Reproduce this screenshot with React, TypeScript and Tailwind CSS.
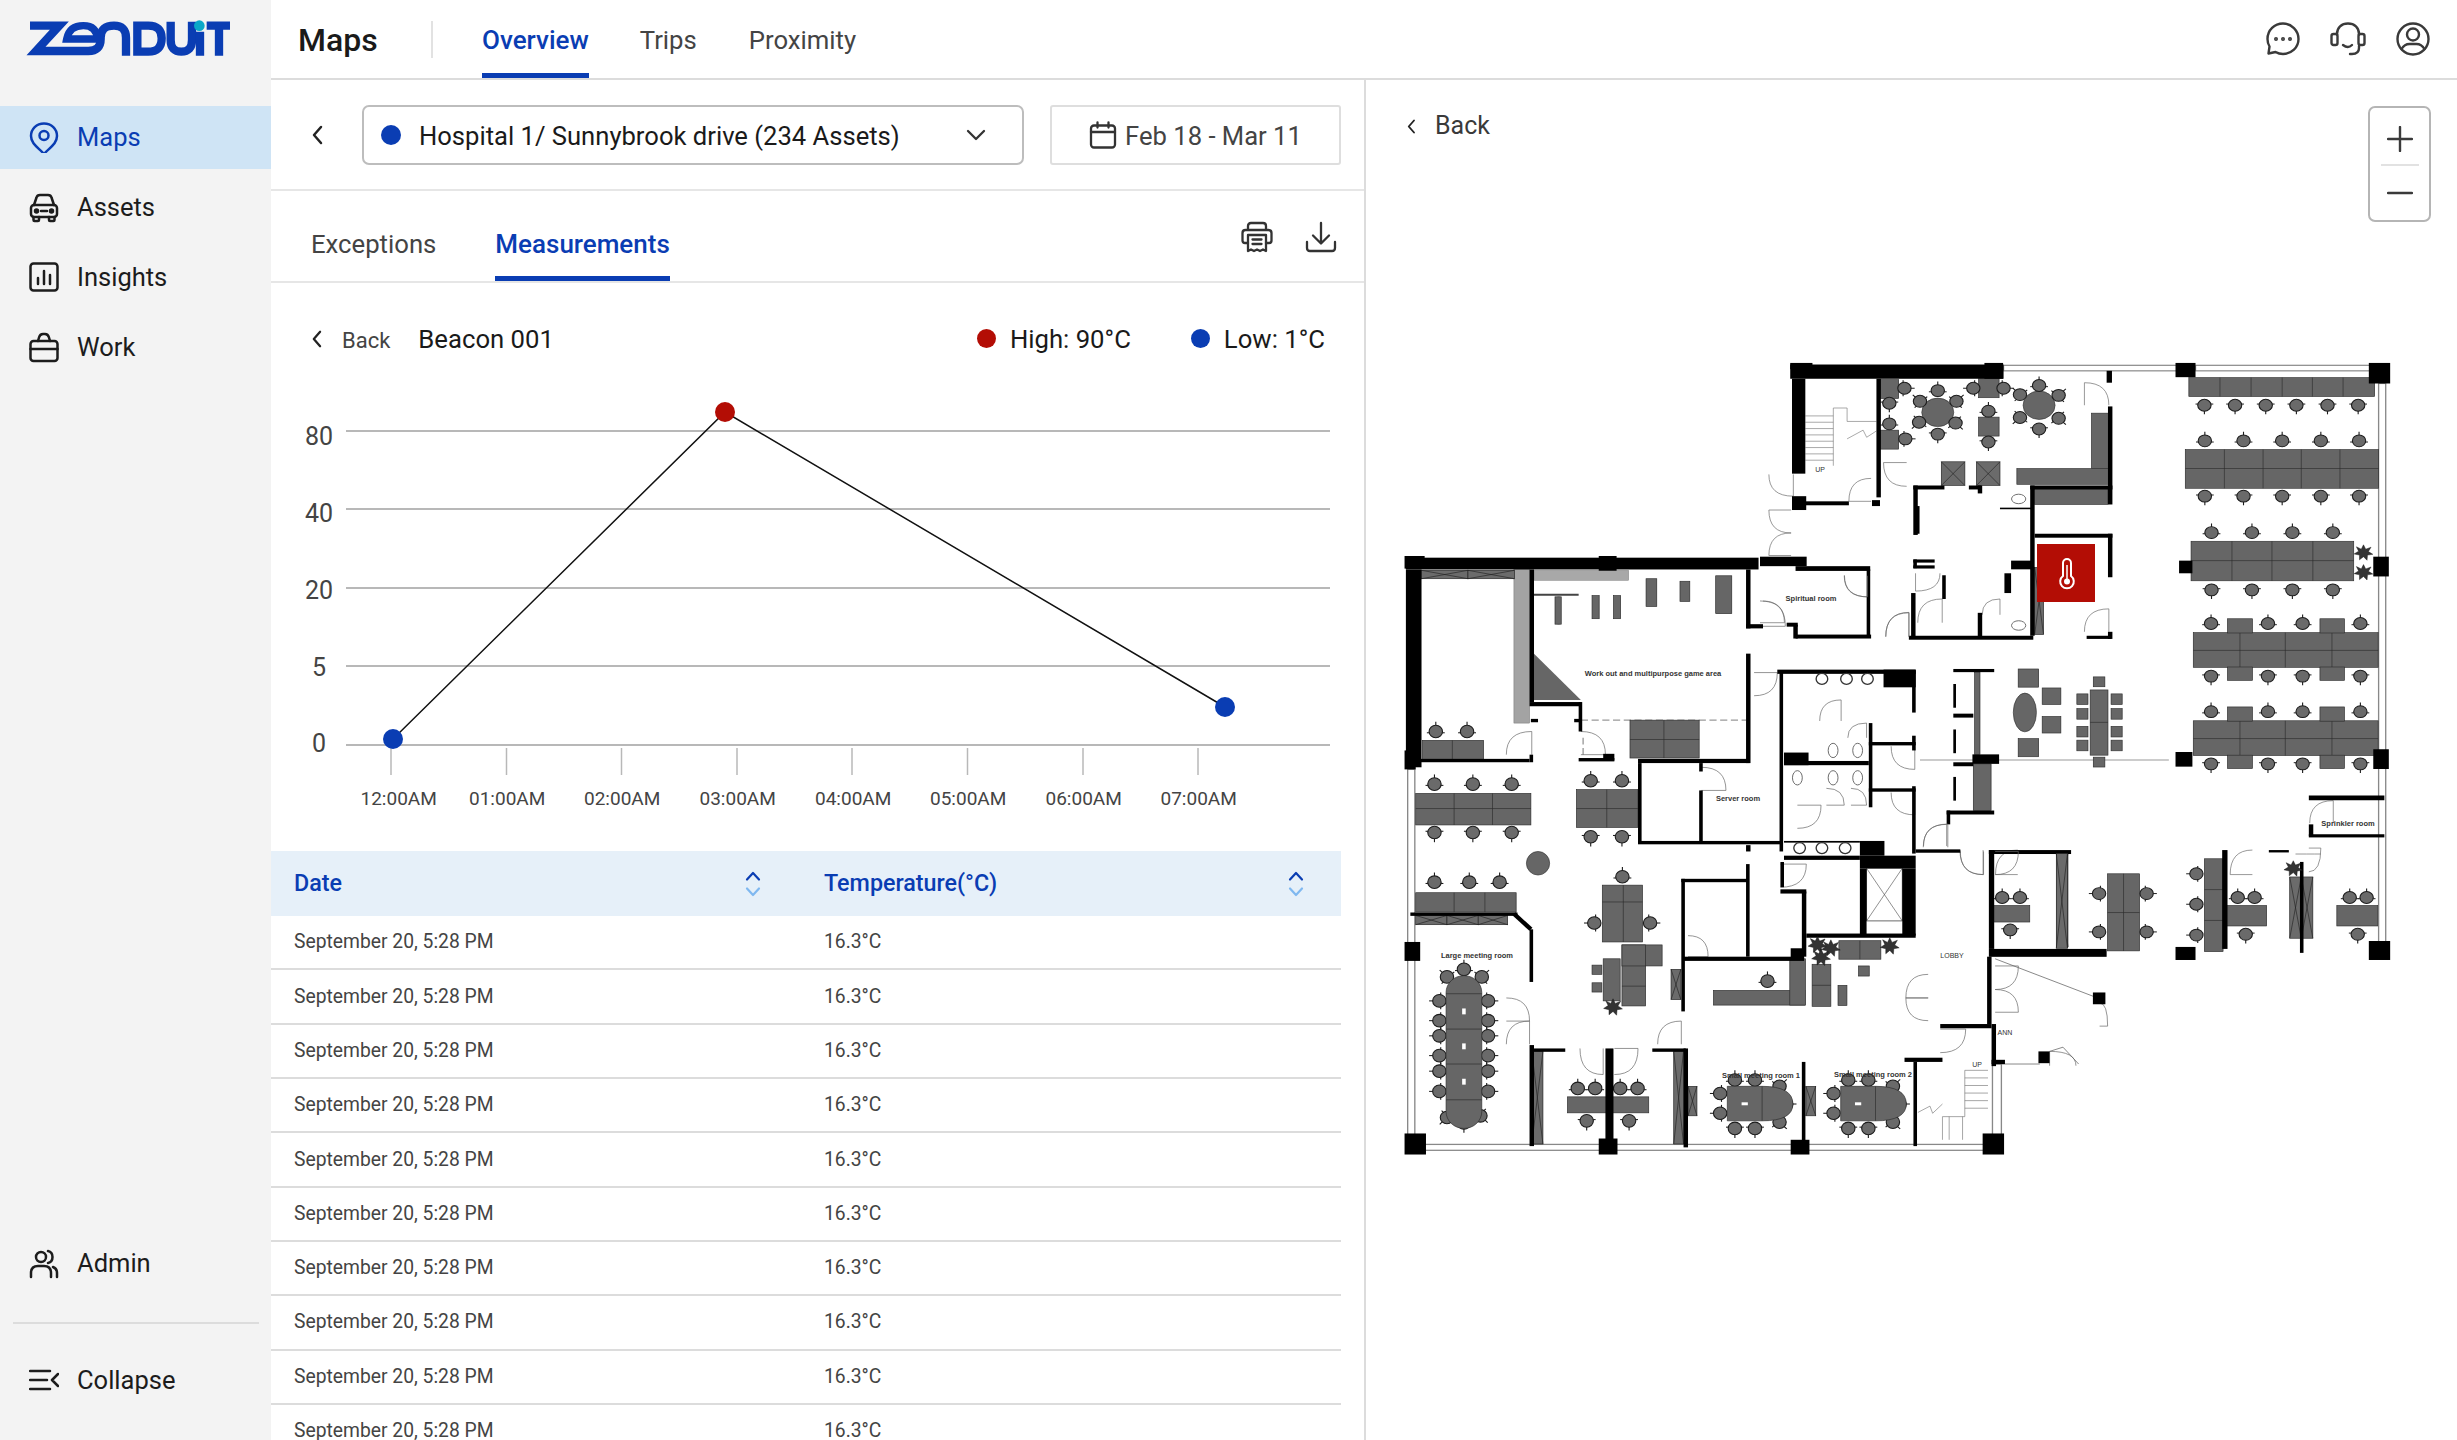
import React from 'react';

type Box = number[];

const BLUE = '#0a3db3';
const RED = '#b30d05';

// ---- floor plan data, in two sets of coordinates that are scaled to the page by <g transform>
const WALLS_A: Box[] = [
  [68,62,480,36],[68,58,50,16],[505,58,42,40],[72,98,30,240],[72,395,32,35],[100,408,100,10],[262,98,10,300],[252,405,18,15],
  [345,368,70,10],[345,368,10,125],[470,368,28,10],[490,368,10,20],[608,368,185,10],[783,168,10,248],[608,368,10,380],[618,490,175,10],
  [783,490,10,110],[780,78,12,30],[735,748,55,8],[783,738,10,18],[340,640,10,110],[240,580,8,170],[80,745,170,10],[335,748,280,10],
  [490,690,10,60],[0,548,105,24],[80,572,168,12],[60,715,25,10],[75,720,10,35],[345,555,48,8],[345,570,48,8],[345,555,8,22],
  [410,595,8,60],[353,420,6,70],[565,558,50,22],[550,590,15,50],[540,424,70,4],[943,558,30,32],[935,1042,38,37],[1380,548,35,50],
  [1380,1035,35,50],[935,58,45,36],[1370,58,48,52],[435,832,92,8],[435,945,45,10],[435,1068,45,10],[478,1048,60,24],[420,1190,107,10],
  [420,1190,8,35],[435,870,6,60],[435,985,6,60],[435,1105,6,60],[515,1290,185,10],[515,1290,12,250],[515,1540,265,20],[1040,1290,12,250],
  [1145,1290,45,6],[1215,1320,8,230],[1235,1152,170,12],[1235,1250,170,8],[1235,1225,10,30],[935,1535,45,33],[1370,1520,48,48],
];

const WALLS_B: Box[] = [
  [58,42,790,28],[55,38,45,30],[490,38,40,35],[58,70,35,470],[55,500,25,45],[335,70,10,315],[335,385,115,10],[445,385,8,70],
  [338,425,16,8],[435,425,12,8],[80,520,255,8],[335,510,8,18],[445,518,80,8],[500,508,25,16],[578,520,250,10],[820,70,10,140],
  [820,200,38,10],[820,270,10,260],[578,530,8,190],[578,715,320,8],[715,530,8,20],[715,595,8,125],[895,310,8,430],[890,308,310,10],
  [1128,308,72,42],[1192,310,8,100],[1192,465,8,35],[1095,480,105,8],[1095,435,8,200],[905,505,55,30],[905,525,190,10],[1192,585,8,160],
  [1095,590,105,8],[905,715,170,4],[1075,715,55,35],[905,750,170,10],[1075,750,125,30],[1075,780,15,160],[1170,780,30,160],[955,935,245,10],
  [897,765,8,60],[897,830,58,10],[945,835,10,155],[820,770,8,220],[820,725,10,15],[675,805,150,8],[675,805,8,315],[680,990,270,10],
  [920,970,30,25],[1200,735,100,8],[68,885,240,8],[335,925,8,125],[335,1200,10,240],[345,1208,70,8],[505,1208,18,230],[610,1208,75,8],
  [680,1208,10,235],[945,1240,8,200],[55,1410,48,50],[490,1422,42,38],[920,1425,42,35],[1350,1410,48,50],[55,955,35,45],[1255,1150,115,10],
  [1370,1150,10,100],[1175,1230,85,10],[1195,1240,8,200],[1370,1235,30,10],[1360,990,10,160],[1475,1215,25,28],[1597,1075,28,28],
];

// x, y, w, h then the x of vertical dividers and the y of horizontal ones
const DESKS_A: { b: Box; v?: number[]; h?: number[] }[] = [
  { b: [965,95,418,48], v: [1035,1105,1175,1243,1312] },
  { b: [957,277,435,98], v: [1045,1132,1218,1305], h: [325] },
  { b: [970,509,366,100], v: [1062,1152,1244], h: [558] },
  { b: [975,740,416,88], v: [1080,1182,1287], h: [785] },
  { b: [1052,705,56,36] }, { b: [1260,705,55,36] }, { b: [1052,827,56,34] }, { b: [1260,827,55,34] },
  { b: [975,963,416,88], v: [1080,1182,1287], h: [1008] },
  { b: [1052,928,56,36] }, { b: [1260,928,55,36] }, { b: [1052,1050,56,34] }, { b: [1260,1050,55,34] },
  { b: [270,100,42,48] }, { b: [492,98,46,48] }, { b: [492,195,46,48] }, { b: [270,228,42,48] },
  { b: [746,185,38,140] }, { b: [578,325,206,40] }, { b: [618,378,165,38] },
  { b: [782,1350,72,195], v: [818], h: [1448] }, { b: [1000,1312,42,235], h: [1390,1468] },
  { b: [1050,1430,90,52] }, { b: [1298,1430,92,52] }, { b: [522,1430,85,42] }, { b: [480,1072,40,118] }, { b: [483,840,12,208] },
  { b: [743,885,40,165], h: [967] }, { b: [750,852,26,25] }, { b: [750,1055,26,25] },
  { b: [713,895,25,27] }, { b: [713,932,25,27] }, { b: [713,977,25,27] }, { b: [713,1012,25,27] },
  { b: [790,895,25,27] }, { b: [790,932,25,27] }, { b: [790,977,25,27] }, { b: [790,1012,25,27] },
  { b: [581,832,46,46] }, { b: [581,1008,46,46] }, { b: [635,880,42,42] }, { b: [635,952,42,42] },
];

const DESKS_B: { b: Box; v?: number[]; h?: number[] }[] = [
  { b: [80,602,258,75], v: [166,252], h: [638] },
  { b: [440,593,138,90], v: [508], h: [638] },
  { b: [80,838,225,46], v: [166,235] },
  { b: [95,476,137,45], v: [162] },
  { b: [560,428,155,90], v: [636], h: [474] },
  { b: [498,820,90,135], v: [545], h: [860] },
  { b: [500,995,38,100] }, { b: [475,1010,22,22] }, { b: [475,1052,22,22] },
  { b: [542,962,90,50] }, { b: [542,962,53,145], h: [1012,1060] },
  { b: [747,1070,205,35] }, { b: [918,995,35,110] }, { b: [968,1008,42,100], h: [1058] },
  { b: [1072,1012,24,24] }, { b: [1026,1058,20,48] }, { b: [1028,952,94,44], v: [1075] },
  { b: [420,1323,182,38] }, { b: [475,132,16,55] }, { b: [523,132,16,55] }, { b: [752,85,36,90] },
  { b: [392,135,14,65] }, { b: [672,98,22,48] }, { b: [596,92,24,66] },
];

// x, y, rotation
const CHAIRS_A: Box[] = [
  ...[1000,1069,1138,1207,1277,1346].map((x) => [x,165,180]),
  ...[1001,1088,1175,1262,1348].map((x) => [x,255,0]),
  ...[1001,1088,1175,1262,1348].map((x) => [x,395,180]),
  ...[1016,1107,1198,1289].map((x) => [x,487,0]),
  ...[1016,1107,1198,1289].map((x) => [x,632,180]),
  ...[1015,1143,1221,1351].map((x) => [x,717,0]),
  ...[1015,1143,1221,1351].map((x) => [x,850,180]),
  ...[1015,1143,1221,1351].map((x) => [x,940,0]),
  ...[1015,1143,1221,1351].map((x) => [x,1072,180]),
  [360,155,-45],[400,128,0],[442,155,45],[440,210,135],[400,238,180],[358,208,-135],
  [585,138,-45],[628,115,0],[672,140,45],[672,198,135],[628,225,180],[585,196,-135],
  [325,122,90],[291,160,180],[291,212,0],[327,250,90],[480,122,-90],[548,122,90],[514,180,0],[514,258,180],
  [763,1400,-90],[870,1400,90],[763,1497,-90],[870,1497,90],[982,1350,-90],[982,1427,-90],[982,1505,-90],
  [1075,1410,0],[1113,1410,0],[1093,1503,180],[1327,1410,0],[1365,1410,0],[1345,1503,180],[545,1410,0],[585,1410,0],[563,1492,180],
];

const CHAIRS_B: Box[] = [
  [122,580,0],[208,580,0],[295,580,0],[122,695,180],[208,695,180],[295,695,180],
  [472,572,0],[542,572,0],[472,705,180],[542,705,180],[122,813,0],[200,813,0],[268,813,0],
  [125,455,0],[195,455,0],[543,800,0],[480,910,-90],[605,910,90],[868,1048,0],
  ...[1095,1142,1178,1225,1262,1310].map((y) => [133,y,-90]),
  ...[1095,1142,1178,1225,1262,1310].map((y) => [242,y,90]),
  [150,1038,-45],[188,1020,0],[228,1038,45],[150,1372,-135],[188,1385,180],[225,1368,135],
  [795,1283,0],[840,1283,0],[762,1315,-90],[762,1362,-90],[795,1398,180],[840,1398,180],[895,1298,45],[910,1340,90],[895,1383,135],
  [1049,1283,0],[1094,1283,0],[1016,1315,-90],[1016,1362,-90],[1049,1398,180],[1094,1398,180],[1149,1298,45],[1164,1340,90],[1149,1383,135],
  [443,1303,0],[482,1303,0],[538,1303,0],[577,1303,0],[463,1380,180],[558,1380,180],
];

// x1, y1, x2, y2, and which corner the arc bends towards
const DOORS_A: Box[] = [
  [785,165,730,108,1],[250,350,200,408,0],[20,340,75,395,1],[70,488,20,430,0],[70,488,20,545,0],[330,370,278,310,0],
  [190,595,245,650,1],[0,660,55,715,0],[283,750,335,690,1],[405,590,350,635,1],[355,715,410,655,1],[500,695,540,655,1],
  [730,738,785,680,1],[1237,1222,1290,1165,1],[1262,1300,1205,1300,1],[1108,1290,1058,1352,0],[580,1290,530,1352,0],
  [450,1290,502,1352,1],[368,1280,420,1225,1],[1235,1345,1262,1285,0],
];

const DOORS_B: Box[] = [
  [283,510,340,455,1],[450,455,505,510,0],[720,540,775,595,0],[838,370,890,315,0],[283,1088,335,1143,0],[283,1198,335,1143,1],
  [622,1198,675,1143,1],[448,1208,500,1270,1],[525,1270,578,1208,0],[690,940,735,990,0],[897,825,955,770,0],[1217,730,1272,675,1],
  [1300,740,1352,795,1],[1378,795,1430,740,0],[1378,1068,1430,1012,0],[1378,1068,1430,1122,0],[1228,1032,1178,1088,0],[1228,1142,1178,1088,0],
  [1255,1218,1312,1162,0],[1145,490,1198,545,1],[1145,600,1198,653,1],[935,685,988,630,0],[985,430,1033,380,1],[1048,470,1090,435,1],
  [1000,590,1040,630,0],[1055,590,1090,630,0],[858,145,908,205,0],[1040,85,1092,135,1],[1133,230,1185,172,1],
  [1612,1100,1630,1155,0],[1559,1249,1500,1215,1],
];

const HATCH_A: Box[] = [
  [408,308,53,60],[487,308,53,60],[668,1295,25,240],[1192,1358,26,155],[1218,1358,26,155],[618,575,20,170],[240,1338,80,130],
];
const HATCH_B: Box[] = [
  [93,72,104,20],[197,72,104,20],[80,892,70,22],[150,892,70,22],[220,892,66,22],[340,1215,25,220],[658,1215,22,220],
  [652,1020,22,72],[690,1298,20,70],[954,1298,22,70],[1515,745,25,225],
];

const ROUND_A = [[400,183,36,36],[628,165,36,36],[596,942,26,49]];
const ROUND_B = [[354,768,26,28]];
const SINKS_B = [[990,330],[1045,330],[1092,330],[940,732],[990,732],[1042,732]];
const TOILETS_B = [[1015,500],[1070,500],[935,565],[1015,565],[1070,565]];
const TOILETS_A = [[582,402],[582,722]];

const PLAN_LABELS: [string, number, number, boolean][] = [
  ['Work out and multipurpose game area', 1653, 676, true],
  ['Spiritual room', 1811, 601, true],
  ['Server room', 1738, 801, true],
  ['Large meeting room', 1477, 958, true],
  ['Sprinkler room', 2348, 826, true],
  ['Small meeting room 1', 1761, 1078, true],
  ['Small meeting room 2', 1873, 1077, true],
  ['LOBBY', 1952, 958, false],
  ['ANN', 2005, 1035, false],
  ['UP', 1977, 1067, false],
  ['UP', 1820, 472, false],
];

function Plants({ x, y }: { x: number; y: number }) {
  return (
    <g transform={`translate(${x} ${y})`} fill="#333" stroke="#111" strokeWidth="1">
      <path d="M0-20 5-9 17-14 11-3 21 4 9 6 8 19 0 10-9 18-9 6-21 3-11-4-16-15-5-9Z" />
    </g>
  );
}

function PlanLayer({ walls, desks, chairs, doors, hatch, round }: {
  walls: Box[];
  desks: { b: Box; v?: number[]; h?: number[] }[];
  chairs: Box[];
  doors: Box[];
  hatch: Box[];
  round: number[][];
}) {
  return (
    <>
      {doors.map(([x1, y1, x2, y2, f], i) => {
        const cx = f ? x1 : x2;
        const cy = f ? y2 : y1;
        return (
          <path key={i} d={`M${x1} ${y1} Q${cx} ${cy} ${x2} ${y2} L${x1 + x2 - cx} ${y1 + y2 - cy}`} fill="none" stroke="#666" strokeWidth="1.6" />
        );
      })}
      {desks.map(({ b, v, h }, i) => (
        <g key={i} stroke="#2b2b2b" strokeWidth="1.5">
          <rect x={b[0]} y={b[1]} width={b[2]} height={b[3]} fill="#666" />
          {v?.map((x) => <line key={x} x1={x} x2={x} y1={b[1]} y2={b[1] + b[3]} />)}
          {h?.map((y) => <line key={y} y1={y} y2={y} x1={b[0]} x2={b[0] + b[2]} />)}
        </g>
      ))}
      {hatch.map(([x, y, w, h], i) => (
        <g key={i} stroke="#222" strokeWidth="1.5">
          <rect x={x} y={y} width={w} height={h} fill="#6b6b6b" />
          <path d={`M${x} ${y}L${x + w} ${y + h}M${x + w} ${y}L${x} ${y + h}`} />
        </g>
      ))}
      {round.map(([cx, cy, rx, ry], i) => <ellipse key={i} cx={cx} cy={cy} rx={rx} ry={ry} fill="#666" stroke="#333" strokeWidth="1.5" />)}
      {chairs.map(([x, y, r], i) => (
        <g key={i} transform={`translate(${x} ${y}) rotate(${r})`} stroke="#1d1d1d">
          <line x1="-20" x2="20" y1="3" y2="3" strokeWidth="2.5" />
          <line x1="0" x2="0" y1="-14" y2="-23" strokeWidth="2.5" />
          <circle r="15" fill="#6a6a6a" strokeWidth="2.500" />
        </g>
      ))}
      {walls.map(([x, y, w, h], i) => <rect key={i} x={x} y={y} width={w} height={h} fill="#000" />)}
    </>
  );
}

function FloorPlan() {
  const stairs = [192, 208, 224, 240, 256, 272, 288, 304];
  return (
    <svg viewBox="1400 360 1000 810" className="block w-[1000px] h-[810px]">
      {/* upper building and right wing */}
      <g transform="translate(1760 340) scale(0.4444 0.3954)">
        {[[548,64,390,14],[980,64,392,14],[1392,110,16,1440]].map(([x, y, w, h], i) => (
          <rect key={i} x={x} y={y} width={w} height={h} fill="#fff" stroke="#888" strokeWidth="3" />
        ))}
        {stairs.map((y) => <line key={y} x1="102" x2="165" y1={y} y2={y} stroke="#777" strokeWidth="1.5" />)}
        <path d="M165 318V172H196V206H262M196 250 232 228 240 246 262 230" fill="none" stroke="#777" strokeWidth="1.5" />
        <line x1="360" x2="920" y1="1062" y2="1062" stroke="#999" strokeWidth="2.5" />
        <PlanLayer walls={WALLS_A} desks={DESKS_A} chairs={CHAIRS_A} doors={DOORS_A} hatch={HATCH_A} round={ROUND_A} />
        {TOILETS_A.map(([x, y]) => <ellipse key={y} cx={x} cy={y} rx="16" ry="12" fill="#fff" stroke="#555" strokeWidth="2" />)}
        <Plants x={1358} y={538} />
        <Plants x={1358} y={588} />
        <Plants x={1200} y={1337} />
      </g>
      {/* lower left block */}
      <g transform="translate(1380 540) scale(0.4464 0.4209)">
        <rect x="62" y="545" width="16" height="870" fill="#fff" stroke="#888" strokeWidth="3" />
        <rect x="95" y="1436" width="1260" height="14" fill="#fff" stroke="#888" strokeWidth="3" />
        <rect x="1372" y="1245" width="20" height="170" fill="#fff" stroke="#888" strokeWidth="3" />
        <rect x="300" y="70" width="35" height="365" fill="#a3a3a3" stroke="#666" />
        <rect x="345" y="72" width="212" height="24" fill="#a8a8a8" stroke="#777" />
        <path d="M345 270 450 380H345Z" fill="#666" />
        <path d="M300 888 338 925" stroke="#000" strokeWidth="10" />
        <path d="M450 428H820M455 470V510" stroke="#999" strokeWidth="3" strokeDasharray="16 8" />
        <rect x="1090" y="780" width="80" height="125" fill="#fff" stroke="#555" strokeWidth="2" />
        <path d="M1090 780 1170 905M1170 780 1090 905" stroke="#555" strokeWidth="1.5" />
        {[1260, 1278, 1296, 1314, 1332, 1350].map((y) => <line key={y} x1="1310" x2="1362" y1={y} y2={y} stroke="#777" strokeWidth="1.5" />)}
        <path d="M1310 1260V1370H1260V1425M1275 1370V1425M1305 1370V1425M1205 1360 1232 1345 1238 1362 1260 1340" fill="none" stroke="#777" strokeWidth="1.5" />
        <path d="M345 130H445M400 135V200" fill="none" stroke="#444" strokeWidth="5" />
        <path d="M1380 1245H1478M1500 1215 1530 1205 1565 1245M1378 995 1600 1085" fill="none" stroke="#777" strokeWidth="2" />
        <PlanLayer walls={WALLS_B} desks={DESKS_B} chairs={CHAIRS_B} doors={DOORS_B} hatch={HATCH_B} round={ROUND_B} />
        <rect x="148" y="1035" width="80" height="363" rx="40" fill="#666" stroke="#2b2b2b" strokeWidth="1.5" />
        <path d="M148 1078H228M148 1162H228M148 1245H228M148 1330H228" stroke="#2b2b2b" strokeWidth="1.5" />
        {[1120, 1203, 1287].map((y) => <rect key={y} x="184" y={y - 7} width="8" height="14" fill="#fff" />)}
        {[778, 1032].map((x) => (
          <g key={x} stroke="#2b2b2b" strokeWidth="1.5" fill="#666">
            <path d={`M${x} 1298H${x + 78}Q${x + 147} 1298 ${x + 147} 1340Q${x + 147} 1380 ${x + 78} 1380H${x}Z`} />
            <line x1={x + 78} x2={x + 78} y1="1298" y2="1380" />
            <rect x={x + 32} y="1336" width="14" height="7" fill="#fff" stroke="none" />
          </g>
        ))}
        {SINKS_B.map(([x, y]) => <circle key={x + y} cx={x} cy={y} r="13" fill="#fff" stroke="#333" strokeWidth="3" />)}
        {TOILETS_B.map(([x, y]) => <ellipse key={x + y} cx={x} cy={y} rx="11" ry="17" fill="#fff" stroke="#555" strokeWidth="2" />)}
        <Plants x={522} y={1110} />
        <Plants x={980} y={962} />
        <Plants x={1010} y={970} />
        <Plants x={988} y={992} />
        <Plants x={1142} y={965} />
      </g>
      {PLAN_LABELS.map(([t, x, y, b]) => (
        <text key={t + x} x={x} y={y} textAnchor="middle" fontSize={b ? 7.5 : 7} fontWeight={b ? 700 : 400} fill="#333" className="font-['Liberation_Sans']">{t}</text>
      ))}
      {/* alert marker */}
      <rect x="2037" y="544" width="58" height="58" fill={RED} />
      <path d="M2063 563a4 4 0 0 1 8 0v13a6.8 6.8 0 1 1-8 0z" fill="none" stroke="#fff" strokeWidth="2" />
      <circle cx="2067" cy="581.5" r="3" fill="#fff" />
      <line x1="2067" x2="2067" y1="565" y2="581" stroke="#fff" strokeWidth="1.5" />
    </svg>
  );
}

function Logo() {
  return (
    <svg viewBox="0 0 660 150" className="w-[220px] h-[50px]">
      <g fill="none" stroke={BLUE} strokeWidth="25">
        <path d="M30 32H118L48 108H205Q242 108 242 72V68Q242 32 282 32Q318 32 318 68V122" />
        <path d="M140 72H232Q230 32 190 32Q148 32 140 72Z" strokeWidth="22" />
        <path d="M352 32H385Q425 32 425 70Q425 110 385 110H352Z" />
        <path d="M452 20V75Q452 110 484 110Q516 110 516 75V20" />
        <path d="M540 50V122M560 32H630M597 32V122" />
      </g>
      <circle cx="538" cy="32" r="16" fill="#0aa8c8" />
    </svg>
  );
}

const NAV_ICONS: Record<string, React.ReactNode> = {
  Maps: (
    <>
      <path d="M15 1.5C7.5 1.5 2 7 2 14c0 8 8 12 13 18 5-6 13-10 13-18 0-7-5.500-12.500-13-12.500z" />
      <circle cx="15" cy="13.500" r="4.500" />
    </>
  ),
  Assets: (
    <>
      <path d="M5 13 7.500 5.500Q8.200 3 11 3h8q2.800 0 3.500 2.500L25 13" />
      <rect x="2" y="13" width="26" height="12" rx="3" />
      <path d="M4.500 25v3a1 1 0 0 0 1 1h3.500a1 1 0 0 0 1-1v-3M20 25v3a1 1 0 0 0 1 1h3.500a1 1 0 0 0 1-1v-3M12 19h6" />
      <circle cx="7.500" cy="19" r="1.500" fill="currentColor" />
      <circle cx="22.500" cy="19" r="1.500" fill="currentColor" />
    </>
  ),
  Insights: (
    <>
      <rect x="1.500" y="1.500" width="27" height="27" rx="3" />
      <path d="M9 16v6M15 9v13M21 13v9" />
    </>
  ),
  Work: (
    <>
      <rect x="1.500" y="9" width="27" height="20" rx="3" />
      <path d="M1.500 17h27M9 9l1-3.500Q11 2 14 2h2q3 0 4 3.500L21 9" />
    </>
  ),
  Admin: (
    <>
      <circle cx="12" cy="9" r="5" />
      <path d="M2 29v-4q0-7 7-7h6q7 0 7 7v4M19 3q4.500 1 4.500 6T19 15M24 19q4 1.500 4 6v4" />
    </>
  ),
  Collapse: (
    <>
      <path d="M1 6h20M1 15h17M1 24h20M29 9l-6 6 6 6" />
    </>
  ),
};

function NavItem({ name, active }: { name: string; active?: boolean }) {
  return (
    <div className={`flex h-[63px] items-center gap-[18px] pl-[29px] text-[25.5px] ${active ? 'bg-[#cfe4f5] text-[#0a3db3]' : 'text-[#1c1c1c]'}`}>
      <svg viewBox="0 0 30 31" fill="none" stroke="currentColor" strokeWidth="2.500" strokeLinecap="round" strokeLinejoin="round" className="h-[31px] w-[30px] shrink-0">
        {NAV_ICONS[name]}
      </svg>
      {name}
    </div>
  );
}

function Sidebar() {
  return (
    <aside className="flex h-full w-[271px] shrink-0 flex-col bg-[#f3f3f3]">
      <div className="h-[106px] pl-[20px] pt-[15px]">
        <Logo />
      </div>
      <nav className="flex flex-col gap-[7px]">
        <NavItem name="Maps" active />
        <NavItem name="Assets" />
        <NavItem name="Insights" />
        <NavItem name="Work" />
      </nav>
      <div className="mt-auto pb-[28px]">
        <NavItem name="Admin" />
        <div className="mx-[13px] mt-[27px] mb-[25px] h-[2px] w-[246px] bg-[#dcdcdc]" />
        <NavItem name="Collapse" />
      </div>
    </aside>
  );
}

function HeaderIcons() {
  const cls = 'h-[36px] w-[36px]';
  const p = { fill: 'none', stroke: '#3a3a3a', strokeWidth: 2.4, strokeLinecap: 'round' as const, strokeLinejoin: 'round' as const };
  return (
    <div className="ml-auto flex items-center gap-[29px] pr-[26px]">
      <svg viewBox="0 0 36 36" className={cls} {...p}>
        <path d="M18 2.500C9.500 2.500 2.500 9 2.500 18c0 3 .8 5.500 2 7.500L3.500 32.500l7-1.500c2.200 1.300 4.700 2 7.500 2 8.500 0 15.500-6.500 15.500-15S26.500 2.500 18 2.500z" />
        <circle cx="11" cy="18" r=".8" />
        <circle cx="18" cy="18" r=".8" />
        <circle cx="25" cy="18" r=".8" />
      </svg>
      <svg viewBox="0 0 36 36" className={cls} {...p}>
        <path d="M7 13.500V13C7 6.500 11.500 2.500 18 2.500S29 6.500 29 13v.5M29 25v2q0 6-7 6h-2M13 24q5 4 9 0" />
        <rect x="1.500" y="13" width="6" height="11" rx="2" />
        <rect x="28.500" y="13" width="6" height="11" rx="2" />
      </svg>
      <svg viewBox="0 0 36 36" className={cls} {...p}>
        <circle cx="18" cy="18" r="15.500" />
        <circle cx="18" cy="13.500" r="6" />
        <path d="M6.500 28q3-5 8-5h7q5 0 8 5" />
      </svg>
    </div>
  );
}

function Tab({ label, active, className = '' }: { label: string; active?: boolean; className?: string }) {
  return (
    <div className={`flex items-center border-b-[5px] ${active ? 'border-[#0a3db3] font-medium text-[#0a3db3] text-[26px]' : 'border-transparent text-[#444] text-[25.7px]'} ${className}`}>
      {label}
    </div>
  );
}

function Chevron({ className = '' }: { className?: string }) {
  return (
    <svg viewBox="0 0 12 20" fill="none" stroke="#222" strokeWidth="2.500" strokeLinecap="round" strokeLinejoin="round" className={className}>
      <path d="M10 2 3 10l7 8" />
    </svg>
  );
}

function Chart() {
  const yLines = [[431, '80', 436], [509, '40', 513], [588, '20', 590], [666, '5', 667], [745, '0', 743]] as const;
  const ticks = [391, 506.5, 621.5, 737, 852, 967.5, 1083, 1198];
  const labels = [360.5, 469, 584, 699.5, 815, 930, 1045.5, 1160.5];
  return (
    <svg viewBox="271 395 1095 456" className="block h-[456px] w-[1095px]">
      {yLines.map(([y, t, ty]) => (
        <g key={t}>
          <line x1="346" x2="1330" y1={y} y2={y} stroke="#b8b8b8" strokeWidth="2" />
          <text x="319" y={ty} textAnchor="middle" dominantBaseline="central" fontSize="25" fill="#444">{t}</text>
        </g>
      ))}
      {ticks.map((x, i) => (
        <g key={x}>
          <line x1={x} x2={x} y1="748" y2="775" stroke="#b8b8b8" strokeWidth="1.500" />
          <text x={labels[i]} y="798" dominantBaseline="central" fontSize="19" fill="#444">{`0${i}:00AM`.replace('00:00', '12:00')}</text>
        </g>
      ))}
      <path d="M393 739 725 412 1225 707" fill="none" stroke="#111" strokeWidth="1.500" />
      <circle cx="393" cy="739" r="10" fill={BLUE} />
      <circle cx="725" cy="412" r="10" fill={RED} />
      <circle cx="1225" cy="707" r="10" fill={BLUE} />
    </svg>
  );
}

function SortIcon({ className = '' }: { className?: string }) {
  return (
    <svg viewBox="0 0 16 26" fill="none" strokeWidth="2.200" strokeLinecap="round" strokeLinejoin="round" className={`h-[26px] w-[16px] ${className}`}>
      <path d="M2 8.500 8 2l6 6.500" stroke={BLUE} />
      <path d="M2 17.500 8 24l6-6.500" stroke="#7fb8f0" />
    </svg>
  );
}

function MeasureTable() {
  const rows = Array.from({ length: 10 });
  return (
    <div className="mr-[23px] text-[19.3px] text-[#444]">
      <div className="flex h-[65px] items-center bg-[#e6f0f9] pl-[23px] text-[23.3px] font-medium text-[#0a3db3]">
        <div className="w-[530px]">Date</div>
        <div>Temperature(°C)</div>
      </div>
      {rows.map((_, i) => (
        <div key={i} className="flex h-[54.33px] items-center border-b-2 border-[#dcdcdc] pl-[23px] pt-[1px]">
          <div className="w-[530px]">September 20, 5:28 PM</div>
          <div>16.3°C</div>
        </div>
      ))}
    </div>
  );
}

export default function App() {
  return (
    <div className="flex h-[1440px] w-full overflow-hidden bg-white font-['Roboto',sans-serif]">
      <Sidebar />
      <main className="flex min-w-0 flex-1 flex-col">
        {/* top bar */}
        <header className="flex h-[80px] shrink-0 border-b-2 border-[#dcdcdc]">
          <div className="flex items-center pl-[27px]">
            <span className="w-[133px] pt-[2px] text-[32px] font-medium text-[#1a1a1a]">Maps</span>
            <span className="h-[37px] w-[2px] bg-[#e2e2e2]" />
          </div>
          <Tab label="Overview" active className="ml-[49px] pt-[8px]" />
          <Tab label="Trips" className="ml-[51px] pt-[8px]" />
          <Tab label="Proximity" className="ml-[52px] pt-[8px]" />
          <HeaderIcons />
        </header>

        <div className="flex min-h-0 flex-1">
          {/* left panel */}
          <section className="w-[1095px] shrink-0 overflow-hidden border-r-2 border-[#dcdcdc]">
            <div className="flex h-[111px] items-center border-b-2 border-[#e6e6e6] pl-[40px]">
              <Chevron className="h-[20px] w-[12px]" />
              <div className="ml-[39px] flex h-[60px] w-[662px] items-center rounded-[7px] border-2 border-[#bdbdbd] pl-[17px] pr-[36px] text-[25.6px] text-[#1a1a1a]">
                <span className="h-[20px] w-[20px] rounded-full bg-[#0a3db3]" />
                <span className="ml-[18px] pt-[3px]">Hospital 1/ Sunnybrook drive (234 Assets)</span>
                <svg viewBox="0 0 20 12" fill="none" stroke="#333" strokeWidth="2.300" strokeLinecap="round" strokeLinejoin="round" className="ml-auto h-[12px] w-[20px]">
                  <path d="M2 2l8 8 8-8" />
                </svg>
              </div>
              <div className="ml-[26px] flex h-[60px] w-[291px] items-center justify-center gap-[8px] rounded-[3px] border-2 border-[#dedede] text-[25.6px] text-[#444]">
                <svg viewBox="0 0 28 28" fill="none" stroke="#333" strokeWidth="2.300" strokeLinecap="round" className="h-[28px] w-[28px]">
                  <rect x="2" y="4.500" width="24" height="22" rx="3" />
                  <path d="M2 11h24M8.500 1.500v5M19.500 1.500v5" />
                </svg>
                <span className="pt-[3px]">Feb 18 - Mar 11</span>
              </div>
            </div>

            <div className="flex h-[92px] border-b-2 border-[#e6e6e6] pl-[40px]">
              <Tab label="Exceptions" className="pt-[22px]" />
              <Tab label="Measurements" active className="ml-[59px] pt-[22px]" />
              <div className="ml-auto flex items-start gap-[32px] pr-[27px] pt-[30px]">
                <svg viewBox="0 0 32 32" fill="none" stroke="#333" strokeWidth="2.300" strokeLinecap="round" strokeLinejoin="round" className="h-[32px] w-[32px]">
                  <path d="M7 9V5q0-3 3-3h12q3 0 3 3v4M7 22H4q-2.500 0-2.500-2.500V12Q1.500 9 4.500 9h23q3 0 3 3v7.500Q30.500 22 28 22h-3" />
                  <path d="M7 14h18v16l-3-1.500-3 1.500-3-1.500-3 1.500-3-1.500L7 30zM11.500 18.500h9M11.500 23h9" />
                </svg>
                <svg viewBox="0 0 32 32" fill="none" stroke="#333" strokeWidth="2.300" strokeLinecap="round" strokeLinejoin="round" className="h-[32px] w-[32px]">
                  <path d="M16 2v20M8 14.500l8 8 8-8M2 21v6q0 3 3 3h22q3 0 3-3v-6" />
                </svg>
              </div>
            </div>

            <div className="flex h-[112px] items-center pl-[40px]">
              <Chevron className="h-[18px] w-[11px]" />
              <span className="ml-[20px] pt-[2px] text-[22px] text-[#444]">Back</span>
              <span className="ml-[28px] pt-[1px] text-[25.7px] text-[#1a1a1a]">Beacon 001</span>
              <div className="ml-auto flex items-center pr-[39px] text-[25.7px] text-[#1a1a1a]">
                <span className="h-[19px] w-[19px] rounded-full bg-[#b30d05]" />
                <span className="ml-[14px]">High: 90°C</span>
                <span className="ml-[60px] h-[19px] w-[19px] rounded-full bg-[#0a3db3]" />
                <span className="ml-[14px]">Low: 1°C</span>
              </div>
            </div>

            <Chart />

            <div className="relative">
              <MeasureTable />
              <SortIcon className="absolute left-[474px] top-[20px]" />
              <SortIcon className="absolute left-[1017px] top-[20px]" />
            </div>
          </section>

          {/* right panel */}
          <section className="relative min-w-0 flex-1">
            <div className="flex h-[92px] items-center pl-[40px] text-[25px] text-[#3a3a3a]">
              <Chevron className="h-[15px] w-[10px]" />
              <span className="ml-[19px]">Back</span>
            </div>
            <div className="ml-[34px] mt-[188px]">
              <FloorPlan />
            </div>
            <div className="absolute left-[1002px] top-[26px] flex h-[116px] w-[63px] flex-col items-center rounded-[7px] border-2 border-[#b5b5b5] bg-white">
              <svg viewBox="0 0 26 26" stroke="#3a3a3a" strokeWidth="2.400" strokeLinecap="round" className="mt-[18px] h-[26px] w-[26px]">
                <path d="M13 1v24M1 13h24" />
              </svg>
              <div className="mt-[12px] h-[2px] w-[38px] bg-[#e2e2e2]" />
              <svg viewBox="0 0 26 4" stroke="#3a3a3a" strokeWidth="2.400" strokeLinecap="round" className="mt-[25px] h-[4px] w-[26px]">
                <path d="M1 2h24" />
              </svg>
            </div>
          </section>
        </div>
      </main>
    </div>
  );
}
